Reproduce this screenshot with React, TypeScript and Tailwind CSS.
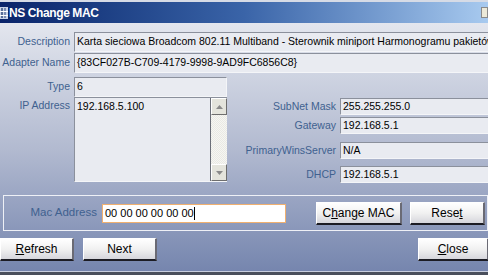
import React from 'react'

const field =
  'h-full bg-[#e9ebf1] border-t border-l border-t-[#8b909c] border-l-[#8b909c] border-b border-r border-b-[#f4f5f8] border-r-[#f4f5f8] pl-[2px] flex items-center text-black whitespace-nowrap overflow-hidden'

function Btn({ children, className = '' }: { children: React.ReactNode; className?: string }) {
  return (
    <div
      className={
        'h-[23px] flex items-center justify-center text-[12px] text-black bg-gradient-to-b from-[#ffffff] via-[#f1f1f1] to-[#d6d6dc] border-t border-l border-t-[#ffffff] border-l-[#ffffff] border-b-2 border-r-2 border-b-[#1c1c24] border-r-[#6a6a74] ' +
        className
      }
    >
      {children}
    </div>
  )
}

function Label({ children, className = '' }: { children: React.ReactNode; className?: string }) {
  return <div className={'text-right text-[#40618f] whitespace-nowrap ' + className}>{children}</div>
}

const rightRows = [
  ['SubNet Mask', '255.255.255.0', 'mt-0'],
  ['Gateway', '192.168.5.1', 'mt-[2px]'],
  ['PrimaryWinsServer', 'N/A', 'mt-[8px]'],
  ['DHCP', '192.168.5.1', 'mt-[7px]'],
]

export default function App() {
  return (
    <div className="w-[488px] h-[275px] overflow-hidden flex flex-col font-['Liberation_Sans',Arial,sans-serif] text-[10.5px]">
      {/* title bar */}
      <div className="h-[23px] shrink-0 flex items-center bg-gradient-to-r from-[#0a246a] via-[#3a64a8] to-[#a8caef] border-t-2 border-t-[#d6dbe6]">
        <svg width="8" height="12" viewBox="0 0 8 12" className="shrink-0">
          <rect x="0" y="0" width="8" height="12" fill="#c9d3e6" />
          <rect x="1" y="1" width="2" height="10" fill="#5a6f98" />
          <rect x="4" y="1" width="2" height="10" fill="#7b8db3" />
          <rect x="0" y="4" width="8" height="1" fill="#ffffff" />
          <rect x="0" y="8" width="8" height="1" fill="#ffffff" />
        </svg>
        <span className="ml-[1px] text-white font-bold text-[12px] tracking-[-0.4px]">NS Change MAC</span>
        <div className="ml-auto w-[7px] h-[11px] bg-[#ece9d8] border border-[#8a8a8a] self-start mt-[5px]" />
      </div>

      {/* body */}
      <div className="flex-1 flex flex-col bg-gradient-to-b from-[#e3e6ee] via-[#b2bad0] to-[#7484ad]">
        <div className="pt-[9px] flex flex-col gap-[1px]">
          <div className="flex h-[20px] items-center">
            <Label className="w-[71px] pr-[1px]">Description</Label>
            <div className={field + ' ml-[3px] flex-1 mr-[-20px]'}>
              Karta sieciowa Broadcom 802.11 Multiband - Sterownik miniport Harmonogramu pakietów
            </div>
          </div>
          <div className="flex h-[20px] items-center">
            <Label className="w-[71px] pr-[1px]">Adapter Name</Label>
            <div className={field + ' ml-[3px] flex-1 mr-[-20px]'}>{'{83CF027B-C709-4179-9998-9AD9FC6856C8}'}</div>
          </div>
        </div>

        <div className="flex mt-[4px]">
          {/* left column */}
          <div className="flex flex-col">
            <div className="flex h-[20px] items-center">
              <Label className="w-[71px] pr-[1px]">Type</Label>
              <div className={field + ' ml-[3px] w-[153px]'}>6</div>
            </div>
            <div className="flex">
              <Label className="w-[71px] pr-[1px] pt-[1px]">IP Address</Label>
              <div className="ml-[3px] w-[153px] h-[85px] flex border-t border-l border-t-[#8b909c] border-l-[#8b909c] border-b border-b-[#f4f5f8] bg-[#e9ebf1]">
                <div className="flex-1 pl-[2px] pt-[1px] text-black">192.168.5.100</div>
                <div className="w-[17px] flex flex-col bg-[repeating-conic-gradient(#e9e9e4_0%_25%,#f6f6f2_0%_50%)] bg-[length:2px_2px] border-l border-[#6b6f78]">
                  <div className="h-[17px] bg-[#e4e4dc] border border-[#ffffff] border-b-[#6e6e6e] border-r-[#6e6e6e] flex items-center justify-center">
                    <svg width="7" height="4" viewBox="0 0 7 4">
                      <path d="M0 4 L3.5 0 L7 4 Z" fill="#8a8a8a" />
                    </svg>
                  </div>
                  <div className="flex-1" />
                  <div className="h-[17px] bg-[#e4e4dc] border border-[#ffffff] border-b-[#6e6e6e] border-r-[#6e6e6e] flex items-center justify-center">
                    <svg width="7" height="4" viewBox="0 0 7 4">
                      <path d="M0 0 L3.5 4 L7 0 Z" fill="#8a8a8a" />
                    </svg>
                  </div>
                </div>
              </div>
            </div>
          </div>

          {/* right column */}
          <div className="flex-1 flex flex-col pt-[21px]">
            {rightRows.map(([l, v, m]) => (
              <div key={l} className={'flex h-[17px] items-center ' + m}>
                <Label className="w-[110px] pr-[1px]">{l}</Label>
                <div className={field + ' ml-[3px] flex-1 mr-[-20px]'}>{v}</div>
              </div>
            ))}
          </div>
        </div>

        {/* mac address group */}
        <div className="mt-[12px] ml-[3px] h-[36px] flex items-center border border-[#eef0f6]">
          <Label className="w-[95px] pr-[2px] text-[11.5px] text-[#4a6a9c]">Mac Address</Label>
          <div className="ml-[3px] w-[184px] h-[19px] bg-white border border-[#f0b070] flex items-center pl-[2px] text-[11px] text-black">
            00 00 00 00 00 00<span className="w-[1px] h-[13px] bg-black" />
          </div>
          <Btn className="ml-[30px] w-[86px]">
            <span>
              C<u>h</u>ange MAC
            </span>
          </Btn>
          <Btn className="ml-[8px] w-[75px]">
            <span>
              Rese<u>t</u>
            </span>
          </Btn>
        </div>

        {/* bottom buttons */}
        <div className="mt-[7px] flex items-center h-[23px]">
          <Btn className="w-[74px]">
            <span>
              <u>R</u>efresh
            </span>
          </Btn>
          <Btn className="ml-[9px] w-[74px]">Next</Btn>
          <Btn className="ml-auto w-[71px] mr-[-1px]">
            <span>
              <u>C</u>lose
            </span>
          </Btn>
        </div>
        <div className="mt-auto h-[4px] border-t border-[#c8cede] bg-[#4a4f5c]" />
      </div>
    </div>
  )
}
